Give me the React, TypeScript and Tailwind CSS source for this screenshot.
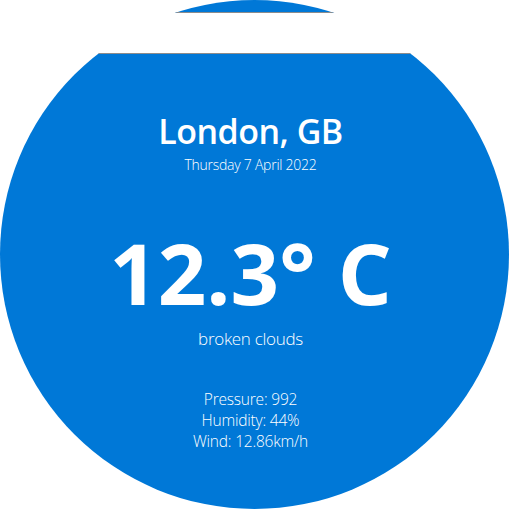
import React from 'react';

const weather = {
  city: 'London, GB',
  date: 'Thursday 7 April 2022',
  temp: '12.3° C',
  description: 'broken clouds',
  pressure: 992,
  humidity: 44,
  wind: 12.86,
};

export default function App() {
  return (
    <div
      className="relative w-[509px] h-[509px] bg-white"
      style={{ fontFamily: '"Open Sans", "Noto Sans", sans-serif' }}
    >
      <div className="w-[509px] h-[509px] rounded-full overflow-hidden bg-[#0078d7] flex flex-col items-center text-white">
        {/* header strip edges, only visible over the circle */}
        <div className="h-[13px] w-full shrink-0 border-b border-[#8c8c8c]" />
        <div className="h-[41px] w-full shrink-0 border-b border-[#8c8c8c]" />

        <div className="flex flex-col items-center pr-[8px]">
          <h1 className="mt-[57px] text-[34px] leading-[40px] font-semibold tracking-[-0.5px]">{weather.city}</h1>
          <p className="mt-[4px] text-[14px] leading-[20px] font-light tracking-[-0.25px]">{weather.date}</p>

          <p className="mt-[52px] text-[85px] leading-[90px] font-bold">{weather.temp}</p>
          <p className="mt-[10px] text-[17px] leading-[24px] font-light tracking-[-0.3px]">{weather.description}</p>

          <div className="mt-[38px] flex flex-col items-center text-[15.5px] leading-[21px] font-light tracking-[-0.2px]">
            <span>Pressure: {weather.pressure}</span>
            <span>Humidity: {weather.humidity}%</span>
            <span>Wind: {weather.wind}km/h</span>
          </div>
        </div>
      </div>

      {/* white header bar laid over the circle */}
      <div className="absolute left-0 top-[13px] w-full h-[40px] bg-white" />
    </div>
  );
}
